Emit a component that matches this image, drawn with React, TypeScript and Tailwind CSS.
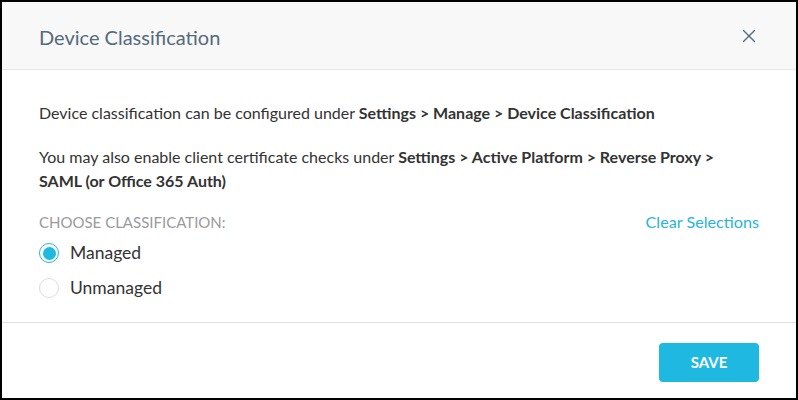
import { X } from 'lucide-react';

export default function App() {
  return (
    <div className="w-[798px] h-[400px] bg-white border-2 border-black flex flex-col font-['Lato',sans-serif]">
      {/* Header */}
      <div className="h-[68px] bg-[#f8f8f8] border-b border-[#e6e6e6] flex items-center justify-between pl-[37px] pr-[36px]">
        <h2 className="text-[20px] text-[#546a7c] mt-[3px]">Device Classification</h2>
        <X className="w-[22px] h-[22px] text-[#546a7c]" strokeWidth={1.5} />
      </div>

      {/* Body */}
      <div className="flex-1 px-[37px] pt-[31px] text-[16px] text-[#333]">
        <p className="leading-6">
          Device classification can be configured under <b>Settings &gt; Manage &gt; Device Classification</b>
        </p>
        <p className="leading-6 mt-[20px]">
          You may also enable client certificate checks under <b>Settings &gt; Active Platform &gt; Reverse Proxy &gt; SAML (or Office 365 Auth)</b>
        </p>
        <div className="flex items-center justify-between mt-[17px]">
          <span className="text-[15px] text-[#9a9a9a] uppercase">Choose Classification:</span>
          <a className="text-[16.2px] text-[#29b3e0]">Clear Selections</a>
        </div>
        <div className="mt-[9px] flex flex-col gap-[15px]">
          <label className="flex items-center gap-[11px] h-[20px]">
            <span className="w-[20px] h-[20px] rounded-full border-[1.5px] border-[#1eb8e0] flex items-center justify-center">
              <span className="w-[13px] h-[13px] rounded-full bg-[#1eb8e0]" />
            </span>
            <span className="text-[17.5px]">Managed</span>
          </label>
          <label className="flex items-center gap-[11px] h-[20px]">
            <span className="w-[20px] h-[20px] rounded-full border border-[#dcdcdc]" />
            <span className="text-[17.5px]">Unmanaged</span>
          </label>
        </div>
      </div>

      {/* Footer */}
      <div className="h-[76px] border-t border-[#e0e0e0] flex items-center justify-end pr-[37px]">
        <button className="w-[100px] h-[39px] rounded bg-[#1eb8e0] text-white text-[15px] font-bold mt-[4px]">
          SAVE
        </button>
      </div>
    </div>
  );
}
